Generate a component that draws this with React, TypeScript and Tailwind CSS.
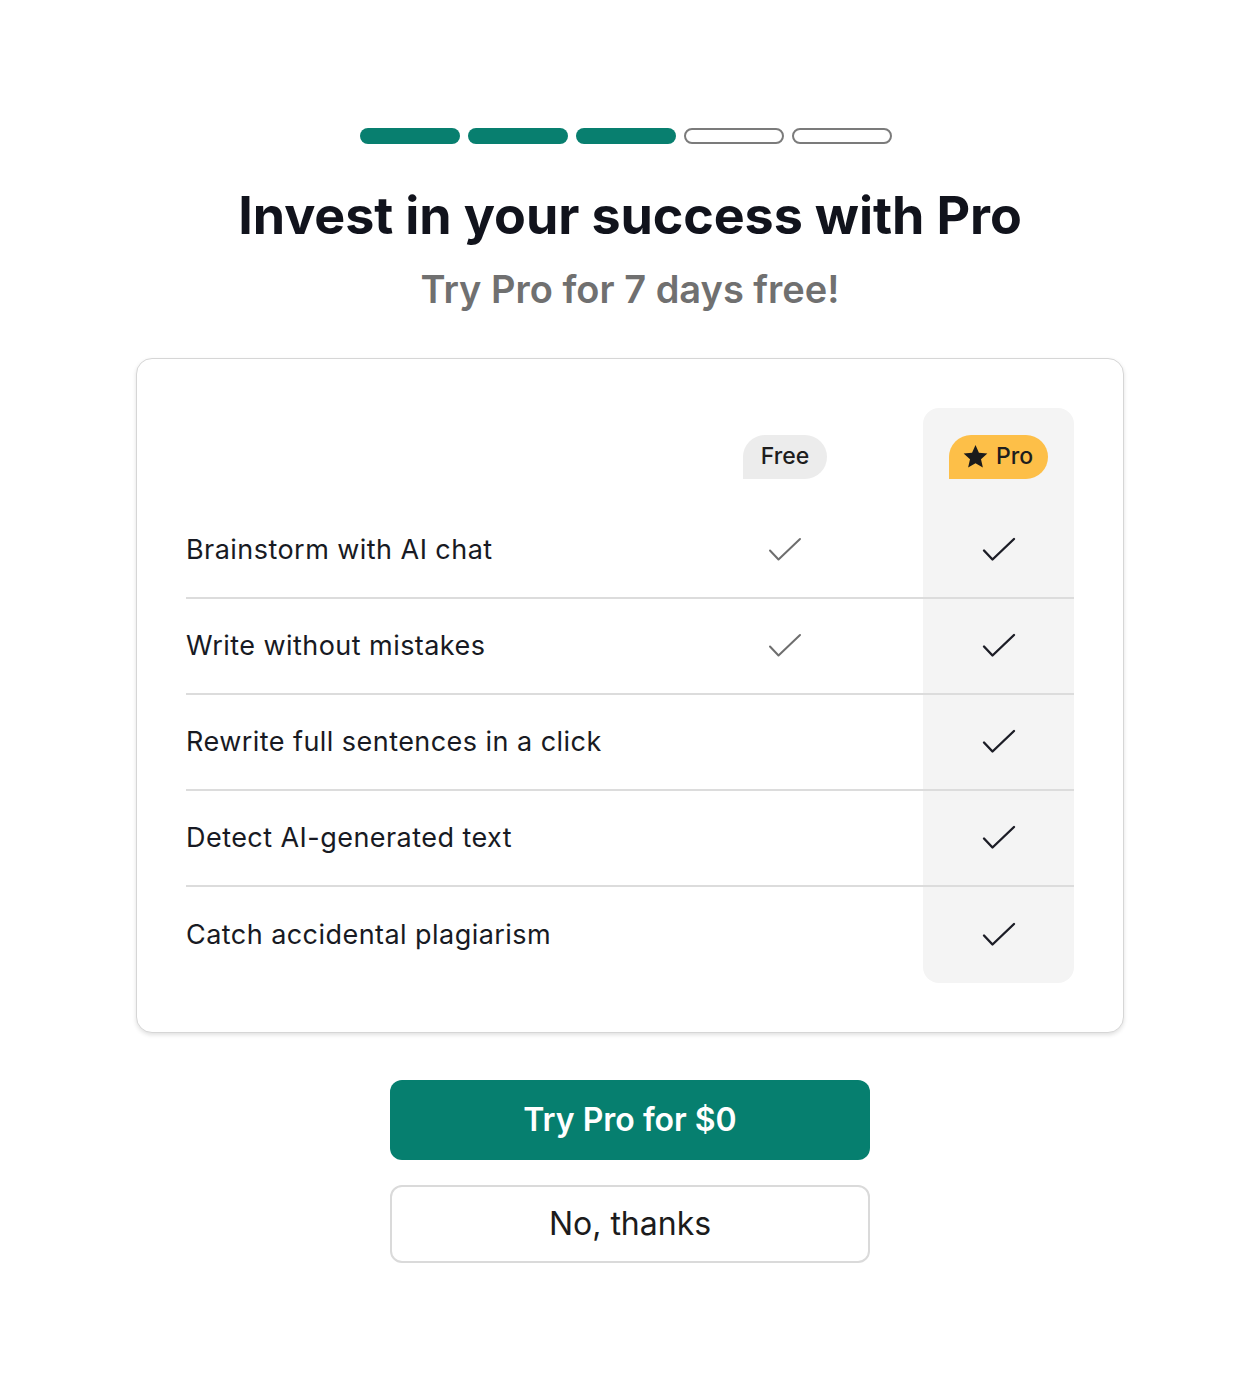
import React from 'react';

type Feature = { label: string; free: boolean };

const features: Feature[] = [
  { label: 'Brainstorm with AI chat', free: true },
  { label: 'Write without mistakes', free: true },
  { label: 'Rewrite full sentences in a click', free: false },
  { label: 'Detect AI-generated text', free: false },
  { label: 'Catch accidental plagiarism', free: false },
];

const Check: React.FC<{ dark?: boolean }> = ({ dark }) => (
  <svg width="34" height="26" viewBox="0 0 34 26" fill="none" aria-hidden="true">
    <polyline
      points="2,13.5 10.5,22.5 32,2"
      stroke={dark ? '#1c1d26' : '#6e6e6e'}
      strokeWidth={dark ? 2.4 : 2}
      strokeLinecap="round"
      strokeLinejoin="round"
    />
  </svg>
);

const Star = () => (
  <svg width="27" height="27" viewBox="0 0 24 24" aria-hidden="true">
    <path
      fill="#1b1b1b"
      d="M12 1.8l3.05 6.9 7.5.7-5.67 4.98 1.67 7.37L12 17.9l-6.55 3.85 1.67-7.37L1.45 9.4l7.5-.7z"
    />
  </svg>
);

export default function App() {
  return (
    <div className="min-h-[1392px] bg-white font-['Inter','Liberation_Sans',sans-serif] text-[#14161f]">
      <div className="mx-auto flex w-[988px] flex-col items-center pt-[128px]">
        {/* Step progress */}
        <div className="flex gap-2 pr-2">
          {[0, 1, 2].map((i) => (
            <div key={i} className="h-4 w-[100px] rounded-full bg-[#087f6f]" />
          ))}
          {[3, 4].map((i) => (
            <div key={i} className="h-4 w-[100px] rounded-full border-2 border-[#7b7b7b] bg-white" />
          ))}
        </div>

        <h1 className="mt-[40px] text-[52px] leading-[64px] font-bold tracking-[-0.1px] text-[#11131c]">
          Invest in your success with Pro
        </h1>
        <p className="mt-[17px] text-[38px] leading-[48px] font-semibold text-[#707070]">
          Try Pro for 7 days free!
        </p>

        {/* Comparison card */}
        <div className="mt-[45px] w-full rounded-2xl border border-[#d6d6d6] bg-white p-[49px] shadow-[0_2px_4px_rgba(0,0,0,0.12)]">
          <div className="flex">
            <div className="flex flex-1 flex-col">
              <div className="flex h-[95px] items-center pt-[2px]">
                <div className="flex-1" />
                <div className="flex w-[150px] justify-center">
                  <span className="flex h-11 items-center rounded-[22px] rounded-bl-none bg-[#ececec] px-[18px] text-[23px] font-medium text-[#1d1d1d]">
                    Free
                  </span>
                </div>
                <div className="w-[63px]" />
              </div>
              {features.map((f, i) => (
                <div
                  key={f.label}
                  className={`flex h-[96px] items-center ${i < features.length - 1 ? 'border-b-2 border-[#dcdcdc]' : ''}`}
                >
                  <span className="flex-1 text-[27px] tracking-[0.45px] text-[#181a23]">{f.label}</span>
                  <div className="flex w-[150px] justify-center">{f.free && <Check />}</div>
                  <div className="w-[63px]" />
                </div>
              ))}
            </div>

            <div className="flex w-[151px] flex-col rounded-2xl bg-[#f4f4f4]">
              <div className="flex h-[95px] items-center justify-center pt-[2px]">
                <span className="flex h-11 items-center gap-[7px] rounded-[22px] rounded-bl-none bg-[#fdbf48] pr-[15px] pl-[13px] text-[23px] font-medium text-[#1d1d1d]">
                  <Star />
                  Pro
                </span>
              </div>
              {features.map((f, i) => (
                <div
                  key={f.label}
                  className={`flex h-[96px] items-center justify-center ${i < features.length - 1 ? 'border-b-2 border-[#dcdcdc]' : ''}`}
                >
                  <Check dark />
                </div>
              ))}
            </div>
          </div>
        </div>

        {/* Actions */}
        <div className="mt-[47px] flex w-[480px] flex-col gap-[25px]">
          <button className="h-20 rounded-xl bg-[#067f6f] text-[32px] font-semibold text-white">
            Try Pro for $0
          </button>
          <button className="h-[78px] rounded-xl border-2 border-[#dadada] bg-white text-[32px] text-[#1c1c1c]">
            No, thanks
          </button>
        </div>
      </div>
    </div>
  );
}
